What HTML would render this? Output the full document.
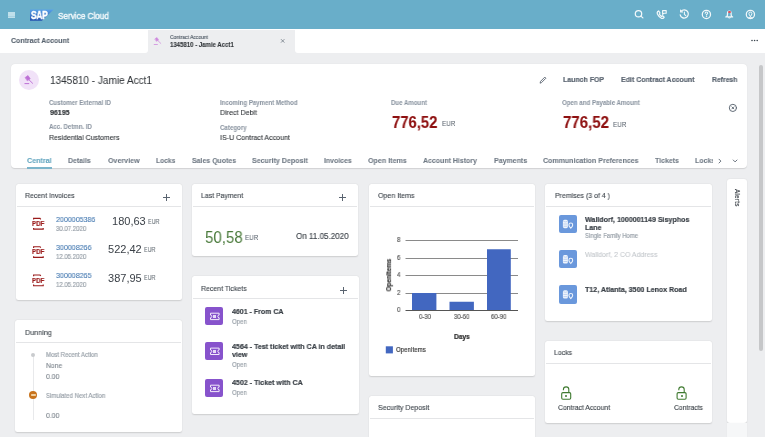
<!DOCTYPE html>
<html><head><meta charset="utf-8"><style>
html,body{margin:0;padding:0;width:765px;height:437px;overflow:hidden;background:#edeef0;font-family:"Liberation Sans",sans-serif;}
.t{position:absolute;white-space:nowrap;will-change:transform;}
</style></head><body>
<div style="position:absolute;left:0px;top:0px;width:765px;height:29px;background:#69aec9"></div>
<div style="position:absolute;left:8.4px;top:12.1px;width:6.6px;height:5.9px;background:#a9d4e3"></div>
<div style="position:absolute;left:8.4px;top:12.3px;width:6.6px;height:1.3px;background:#bfe0eb"></div>
<div style="position:absolute;left:8.4px;top:14.4px;width:6.6px;height:1.3px;background:#bfe0eb"></div>
<div style="position:absolute;left:8.4px;top:16.5px;width:6.6px;height:1.3px;background:#bfe0eb"></div>
<svg style="position:absolute;left:0;top:0" width="765" height="29">
<defs><linearGradient id="sapg" x1="0" y1="0" x2="0" y2="1"><stop offset="0" stop-color="#5aa2e8"/><stop offset="1" stop-color="#2350ae"/></linearGradient></defs>
<polygon points="30,9.4 53.6,9.4 41.9,20.8 30,20.8" fill="url(#sapg)"/>
</svg>
<div class="t" style="left:30.50px;top:11px;font-size:10.4px;line-height:10.4px;font-weight:bold;color:#ffffff;transform:scaleX(0.8000);transform-origin:0 0;-webkit-text-stroke:0.45px #fff;letter-spacing:-0.2px">SAP</div>
<div class="t" style="left:57.50px;top:11px;font-size:9.42px;line-height:9.42px;font-weight:normal;color:#eef6f9;transform:scaleX(0.8696);transform-origin:0 0;-webkit-text-stroke:0.5px #eef6f9">Service Cloud</div>
<svg style="position:absolute;left:0;top:0" width="765" height="29" fill="none" stroke="#f2f8fa" stroke-width="1.25" stroke-linecap="round" stroke-linejoin="round">
<circle cx="638.5" cy="13.7" r="3.2"/><line x1="640.9" y1="16.1" x2="642.9" y2="17.9"/>
<path d="M658.6 10.9 l-1.1 0.9 q-0.7 0.9 0 2.4 q1.4 2.8 3.9 4.1 q1.3 0.5 2.1 -0.3 l0.7 -0.8 l-1.6 -1.5 l-1 0.7 q-1.5 -0.9 -2.3 -2.4 l0.7 -1 z"/>
<path d="M662.6 10.6 h3.6 v2.6 h-2.2 l-1.4 1.1 z" stroke-width="1.1"/>
<path d="M681.1 11.2 a4.1 4.1 0 1 1 -0.9 3.6"/><path d="M680.6 10.0 v1.9 h1.9" stroke-width="1.1"/><path d="M684.4 12.0 v2.4 l1.4 1.2" stroke-width="1.1"/>
<circle cx="706.4" cy="14.4" r="4.1"/><path d="M705.2 13.3 q0 -1.3 1.2 -1.3 q1.3 0 1.3 1.2 q0 0.8 -1.3 1.3 v0.6" stroke-width="1.05"/><circle cx="706.4" cy="16.6" r="0.3" fill="#f2f8fa" stroke-width="0.6"/>
<path d="M725.8 16.9 h6.8 M726.6 16.7 q0.9 -0.8 0.9 -2.4 v-1.1 q0 -2.2 1.8 -2.2 q1.8 0 1.8 2.2 v1.1 q0 1.6 0.9 2.4"/><path d="M728.5 17.8 q0.9 0.6 1.8 0" stroke-width="1"/>
<circle cx="750.4" cy="14.4" r="4.1"/><path d="M750.4 16.4 q-1.5 -1.5 -1.5 -2.8 a1.5 1.5 0 0 1 3 0 q0 1.3 -1.5 2.8 z" stroke-width="1"/><path d="M748.2 17.9 q2.2 -1.2 4.4 0" stroke-width="1"/>
</svg>
<div style="position:absolute;left:728.1px;top:10.6px;width:2.5px;height:2.5px;border-radius:50%;background:#e0505a"></div>
<div style="position:absolute;left:0px;top:29px;width:148px;height:24px;background:#fff;border-bottom-right-radius:3px"></div>
<div style="position:absolute;left:295px;top:29px;width:470px;height:24px;background:#fff;border-bottom-left-radius:3px"></div>
<div style="position:absolute;left:148px;top:29px;width:147px;height:1px;background:#fff"></div>
<div style="position:absolute;left:148px;top:29.9px;width:147px;height:24px;background:#edeef0;border-top-left-radius:4px;border-top-right-radius:4px"></div>
<div class="t" style="left:10.80px;top:37px;font-size:7.67px;line-height:7.67px;font-weight:bold;color:#58636f;transform:scaleX(0.9091);transform-origin:0 0;-webkit-text-stroke:0.1px #58636f;">Contract Account</div>
<div class="t" style="left:170.00px;top:35px;font-size:5.92px;line-height:5.92px;font-weight:normal;color:#5c6670;transform:scaleX(0.8475);transform-origin:0 0;-webkit-text-stroke:0.2px #5c6670;">Contract Account</div>
<div class="t" style="left:170.00px;top:42px;font-size:6.64px;line-height:6.64px;font-weight:bold;color:#32363a;transform:scaleX(0.9091);transform-origin:0 0;-webkit-text-stroke:0.1px #32363a;">1345810 - Jamie Acct1</div>
<svg style="position:absolute;left:0;top:0" width="765" height="60">
<g fill="#cf8ade" stroke="#cf8ade" stroke-linecap="round">
<path d="M155.0 38.8 l2.0 -1.3 l1.6 2.4 l-2.0 1.3 z" stroke-width="0.5"/>
<line x1="157.9" y1="40.6" x2="160.8" y2="43.4" stroke-width="0.75"/>
<line x1="154.2" y1="44.5" x2="157.4" y2="44.5" stroke-width="0.8"/>
</g>
<g stroke="#707a84" stroke-width="0.8"><line x1="281" y1="39.2" x2="284.4" y2="42.6"/><line x1="284.4" y1="39.2" x2="281" y2="42.6"/></g>
<g fill="#3c4650"><circle cx="752" cy="40.5" r="0.8"/><circle cx="754.6" cy="40.5" r="0.8"/><circle cx="757.2" cy="40.5" r="0.8"/></g>
</svg>
<div style="position:absolute;left:10.5px;top:63.5px;width:736.7px;height:104px;background:#fff;border-radius:4px;box-shadow:0 0.5px 1px rgba(0,0,0,0.12)"></div>
<div style="position:absolute;left:18.7px;top:70.3px;width:20px;height:20px;background:#f1e2f8;border-radius:50%"></div>
<svg style="position:absolute;left:0;top:60" width="60" height="40">
<g fill="#bd6fd6" stroke="#bd6fd6" stroke-linecap="round">
<path d="M25.4 17.4 l2.6 -1.8 l2.2 3.2 l-2.6 1.8 z" stroke-width="0.7"/>
<line x1="29.0" y1="19.8" x2="32.6" y2="23.3" stroke-width="0.95"/>
<line x1="24.9" y1="23.6" x2="28.8" y2="23.6" stroke-width="1.0"/>
</g></svg>
<div class="t" style="left:49.70px;top:75px;font-size:10.52px;line-height:10.52px;font-weight:normal;color:#32363a;transform:scaleX(0.9524);transform-origin:0 0;-webkit-text-stroke:0.05px #32363a;">1345810 - Jamie Acct1</div>
<div class="t" style="left:49.00px;top:100px;font-size:6.71px;line-height:6.71px;font-weight:bold;color:#8b95a1;transform:scaleX(0.9091);transform-origin:0 0;-webkit-text-stroke:0.05px #8b95a1;">Customer External ID</div>
<div class="t" style="left:49.70px;top:109px;font-size:7.75px;line-height:7.75px;font-weight:bold;color:#32363a;transform:scaleX(0.9091);transform-origin:0 0;-webkit-text-stroke:0.2px #32363a;">96195</div>
<div class="t" style="left:49.00px;top:124px;font-size:6.7px;line-height:6.7px;font-weight:bold;color:#8b95a1;transform:scaleX(0.9091);transform-origin:0 0;-webkit-text-stroke:0.05px #8b95a1;">Acc. Detmn. ID</div>
<div class="t" style="left:49.00px;top:134px;font-size:7.71px;line-height:7.71px;font-weight:normal;color:#32363a;transform:scaleX(0.9091);transform-origin:0 0;-webkit-text-stroke:0.12px #32363a;">Residential Customers</div>
<div class="t" style="left:219.90px;top:100px;font-size:6.71px;line-height:6.71px;font-weight:bold;color:#8b95a1;transform:scaleX(0.9091);transform-origin:0 0;-webkit-text-stroke:0.05px #8b95a1;">Incoming Payment Method</div>
<div class="t" style="left:219.90px;top:109px;font-size:7.81px;line-height:7.81px;font-weight:normal;color:#32363a;transform:scaleX(0.9091);transform-origin:0 0;-webkit-text-stroke:0.12px #32363a;">Direct Debit</div>
<div class="t" style="left:219.90px;top:125px;font-size:6.75px;line-height:6.75px;font-weight:bold;color:#8b95a1;transform:scaleX(0.9091);transform-origin:0 0;-webkit-text-stroke:0.05px #8b95a1;">Category</div>
<div class="t" style="left:219.90px;top:134px;font-size:7.79px;line-height:7.79px;font-weight:normal;color:#32363a;transform:scaleX(0.9091);transform-origin:0 0;-webkit-text-stroke:0.12px #32363a;">IS-U Contract Account</div>
<div class="t" style="left:391.10px;top:100px;font-size:6.7px;line-height:6.7px;font-weight:bold;color:#8b95a1;transform:scaleX(0.9091);transform-origin:0 0;-webkit-text-stroke:0.05px #8b95a1;">Due Amount</div>
<div class="t" style="left:391.80px;top:115px;font-size:15.59px;line-height:15.59px;font-weight:bold;color:#8e1010;transform:scaleX(0.9524);transform-origin:0 0;-webkit-text-stroke:0.1px #8e1010;">776,52</div>
<div class="t" style="left:441.90px;top:121px;font-size:6.85px;line-height:6.85px;font-weight:normal;color:#5d6670;transform:scaleX(0.9259);transform-origin:0 0;-webkit-text-stroke:0.05px #5d6670;">EUR</div>
<div class="t" style="left:562.20px;top:100px;font-size:6.74px;line-height:6.74px;font-weight:bold;color:#8b95a1;transform:scaleX(0.9091);transform-origin:0 0;-webkit-text-stroke:0.05px #8b95a1;">Open and Payable Amount</div>
<div class="t" style="left:562.50px;top:115px;font-size:15.79px;line-height:15.79px;font-weight:bold;color:#8e1010;transform:scaleX(0.9524);transform-origin:0 0;-webkit-text-stroke:0.1px #8e1010;">776,52</div>
<div class="t" style="left:612.80px;top:122px;font-size:6.91px;line-height:6.91px;font-weight:normal;color:#5d6670;transform:scaleX(0.9259);transform-origin:0 0;-webkit-text-stroke:0.05px #5d6670;">EUR</div>
<div class="t" style="left:563.10px;top:76px;font-size:7.68px;line-height:7.68px;font-weight:bold;color:#5a6470;transform:scaleX(0.9091);transform-origin:0 0;-webkit-text-stroke:0.2px #5a6470;">Launch FOP</div>
<div class="t" style="left:621.20px;top:76px;font-size:7.7px;line-height:7.7px;font-weight:bold;color:#5a6470;transform:scaleX(0.9091);transform-origin:0 0;-webkit-text-stroke:0.2px #5a6470;">Edit Contract Account</div>
<div class="t" style="left:711.80px;top:76px;font-size:7.47px;line-height:7.47px;font-weight:bold;color:#5a6470;transform:scaleX(0.9091);transform-origin:0 0;-webkit-text-stroke:0.2px #5a6470;">Refresh</div>
<svg style="position:absolute;left:0;top:0" width="765" height="170" fill="none" stroke-linecap="round">
<path d="M540.2 82.8 l0.4 -1.5 l4.2 -4.2 l1.1 1.1 l-4.2 4.2 z" stroke="#5a6470" stroke-width="0.9"/>
<circle cx="732.9" cy="107.9" r="3.6" stroke="#5a6470" stroke-width="0.95"/>
<path d="M731.9 106.9 l2 2 M733.9 106.9 l-2 2" stroke="#5a6470" stroke-width="0.9"/>
<path d="M719 159.2 l1.9 1.9 l-1.9 1.9" stroke="#5a6470" stroke-width="0.9"/>
<path d="M733.2 160 l1.9 1.9 l1.9 -1.9" stroke="#5a6470" stroke-width="0.9"/>
</svg>
<div class="t" style="left:27.20px;top:157px;font-size:7.85px;line-height:7.85px;font-weight:bold;color:#62a5bf;transform:scaleX(0.9091);transform-origin:0 0;-webkit-text-stroke:0.08px #62a5bf;">Central</div>
<div class="t" style="left:68.20px;top:157px;font-size:7.65px;line-height:7.65px;font-weight:bold;color:#6f7984;transform:scaleX(0.9091);transform-origin:0 0;-webkit-text-stroke:0.08px #6f7984;">Details</div>
<div class="t" style="left:107.70px;top:157px;font-size:7.82px;line-height:7.82px;font-weight:bold;color:#6f7984;transform:scaleX(0.9091);transform-origin:0 0;-webkit-text-stroke:0.08px #6f7984;">Overview</div>
<div class="t" style="left:155.80px;top:157px;font-size:7.38px;line-height:7.38px;font-weight:bold;color:#6f7984;transform:scaleX(0.9091);transform-origin:0 0;-webkit-text-stroke:0.08px #6f7984;">Locks</div>
<div class="t" style="left:191.80px;top:157px;font-size:7.67px;line-height:7.67px;font-weight:bold;color:#6f7984;transform:scaleX(0.9091);transform-origin:0 0;-webkit-text-stroke:0.08px #6f7984;">Sales Quotes</div>
<div class="t" style="left:252.00px;top:157px;font-size:7.78px;line-height:7.78px;font-weight:bold;color:#6f7984;transform:scaleX(0.9091);transform-origin:0 0;-webkit-text-stroke:0.08px #6f7984;">Security Deposit</div>
<div class="t" style="left:324.00px;top:157px;font-size:7.64px;line-height:7.64px;font-weight:bold;color:#6f7984;transform:scaleX(0.9091);transform-origin:0 0;-webkit-text-stroke:0.08px #6f7984;">Invoices</div>
<div class="t" style="left:368.00px;top:157px;font-size:7.82px;line-height:7.82px;font-weight:bold;color:#6f7984;transform:scaleX(0.9091);transform-origin:0 0;-webkit-text-stroke:0.08px #6f7984;">Open Items</div>
<div class="t" style="left:423.00px;top:157px;font-size:7.68px;line-height:7.68px;font-weight:bold;color:#6f7984;transform:scaleX(0.9091);transform-origin:0 0;-webkit-text-stroke:0.08px #6f7984;">Account History</div>
<div class="t" style="left:493.50px;top:157px;font-size:7.73px;line-height:7.73px;font-weight:bold;color:#6f7984;transform:scaleX(0.9091);transform-origin:0 0;-webkit-text-stroke:0.08px #6f7984;">Payments</div>
<div class="t" style="left:542.90px;top:157px;font-size:7.76px;line-height:7.76px;font-weight:bold;color:#6f7984;transform:scaleX(0.9091);transform-origin:0 0;-webkit-text-stroke:0.08px #6f7984;">Communication Preferences</div>
<div class="t" style="left:654.70px;top:157px;font-size:7.67px;line-height:7.67px;font-weight:bold;color:#6f7984;transform:scaleX(0.9091);transform-origin:0 0;-webkit-text-stroke:0.08px #6f7984;">Tickets</div>
<div class="t" style="left:694.80px;top:157px;font-size:7.7px;line-height:7.7px;font-weight:bold;color:#6f7984;transform:scaleX(0.9091);transform-origin:0 0;-webkit-text-stroke:0.08px #6f7984;width:20px;overflow:hidden">Locks</div>
<div style="position:absolute;left:27px;top:167.4px;width:25px;height:1.5px;background:#7bb4ca"></div>
<div style="position:absolute;left:15.8px;top:183.8px;width:165.8px;height:115.9px;background:#fff;border-radius:2.5px;box-shadow:0 0.4px 1.4px rgba(0,0,0,0.14)"></div>
<div class="t" style="left:25.00px;top:192px;font-size:7.67px;line-height:7.67px;font-weight:normal;color:#3e454c;transform:scaleX(0.9091);transform-origin:0 0;-webkit-text-stroke:0.12px #3e454c;">Recent Invoices</div>
<div style="position:absolute;left:16.8px;top:206.0px;width:163.8px;height:1px;background:#e4e5e7"></div>
<div style="position:absolute;left:163.0px;top:197.35000000000002px;width:7px;height:0.9px;background:#5a6470"></div>
<div style="position:absolute;left:166.05px;top:194.3px;width:0.9px;height:7px;background:#5a6470"></div>
<div style="position:absolute;left:15.3px;top:320.2px;width:166.8px;height:112.30000000000001px;background:#fff;border-radius:2.5px;box-shadow:0 0.4px 1.4px rgba(0,0,0,0.14)"></div>
<div class="t" style="left:24.50px;top:329px;font-size:7.91px;line-height:7.91px;font-weight:normal;color:#3e454c;transform:scaleX(0.9091);transform-origin:0 0;-webkit-text-stroke:0.12px #3e454c;">Dunning</div>
<div style="position:absolute;left:16.3px;top:342.2px;width:164.8px;height:1px;background:#e4e5e7"></div>
<div style="position:absolute;left:192.1px;top:183.9px;width:166.3px;height:72.0px;background:#fff;border-radius:2.5px;box-shadow:0 0.4px 1.4px rgba(0,0,0,0.14)"></div>
<div class="t" style="left:200.80px;top:192px;font-size:7.57px;line-height:7.57px;font-weight:normal;color:#3e454c;transform:scaleX(0.9091);transform-origin:0 0;-webkit-text-stroke:0.12px #3e454c;">Last Payment</div>
<div style="position:absolute;left:193.1px;top:205.7px;width:164.3px;height:1px;background:#e4e5e7"></div>
<div style="position:absolute;left:339.1px;top:197.35000000000002px;width:7px;height:0.9px;background:#5a6470"></div>
<div style="position:absolute;left:342.15000000000003px;top:194.3px;width:0.9px;height:7px;background:#5a6470"></div>
<div style="position:absolute;left:192.0px;top:276.2px;width:166.5px;height:137.8px;background:#fff;border-radius:2.5px;box-shadow:0 0.4px 1.4px rgba(0,0,0,0.14)"></div>
<div class="t" style="left:201.10px;top:285px;font-size:7.67px;line-height:7.67px;font-weight:normal;color:#3e454c;transform:scaleX(0.9091);transform-origin:0 0;-webkit-text-stroke:0.12px #3e454c;">Recent Tickets</div>
<div style="position:absolute;left:193.0px;top:298.1px;width:164.5px;height:1px;background:#e4e5e7"></div>
<div style="position:absolute;left:339.5px;top:289.55px;width:7px;height:0.9px;background:#5a6470"></div>
<div style="position:absolute;left:342.55px;top:286.5px;width:0.9px;height:7px;background:#5a6470"></div>
<div style="position:absolute;left:369.0px;top:183.8px;width:166.2px;height:192.0px;background:#fff;border-radius:2.5px;box-shadow:0 0.4px 1.4px rgba(0,0,0,0.14)"></div>
<div class="t" style="left:377.60px;top:192px;font-size:7.77px;line-height:7.77px;font-weight:normal;color:#3e454c;transform:scaleX(0.9091);transform-origin:0 0;-webkit-text-stroke:0.12px #3e454c;">Open Items</div>
<div style="position:absolute;left:370.0px;top:206.1px;width:164.2px;height:1px;background:#e4e5e7"></div>
<div style="position:absolute;left:369.1px;top:396.0px;width:165.9px;height:50.4px;background:#fff;border-radius:2.5px;box-shadow:0 0.4px 1.4px rgba(0,0,0,0.14)"></div>
<div class="t" style="left:377.80px;top:404px;font-size:7.74px;line-height:7.74px;font-weight:normal;color:#3e454c;transform:scaleX(0.9091);transform-origin:0 0;-webkit-text-stroke:0.12px #3e454c;">Security Deposit</div>
<div style="position:absolute;left:370.1px;top:418.0px;width:163.9px;height:1px;background:#e4e5e7"></div>
<div style="position:absolute;left:545.3px;top:183.9px;width:166.5px;height:137.0px;background:#fff;border-radius:2.5px;box-shadow:0 0.4px 1.4px rgba(0,0,0,0.14)"></div>
<div class="t" style="left:554.90px;top:192px;font-size:7.67px;line-height:7.67px;font-weight:normal;color:#3e454c;transform:scaleX(0.9091);transform-origin:0 0;-webkit-text-stroke:0.12px #3e454c;">Premises (3 of 4 )</div>
<div style="position:absolute;left:546.3px;top:205.8px;width:164.5px;height:1px;background:#e4e5e7"></div>
<div style="position:absolute;left:545.4px;top:341.0px;width:166.5px;height:82.0px;background:#fff;border-radius:2.5px;box-shadow:0 0.4px 1.4px rgba(0,0,0,0.14)"></div>
<div class="t" style="left:554.20px;top:349px;font-size:7.62px;line-height:7.62px;font-weight:normal;color:#3e454c;transform:scaleX(0.9091);transform-origin:0 0;-webkit-text-stroke:0.12px #3e454c;">Locks</div>
<div style="position:absolute;left:546.4px;top:362.7px;width:164.5px;height:1px;background:#e4e5e7"></div>
<div class="t" style="left:55.70px;top:216px;font-size:7.79px;line-height:7.79px;font-weight:normal;color:#4a7db3;transform:scaleX(0.9091);transform-origin:0 0;-webkit-text-stroke:0.12px #4a7db3;">2000005386</div>
<div class="t" style="left:55.70px;top:226px;font-size:7.14px;line-height:7.14px;font-weight:normal;color:#9aa2aa;transform:scaleX(0.8475);transform-origin:0 0;-webkit-text-stroke:0.2px #9aa2aa;">30.07.2020</div>
<div class="t" style="left:111.80px;top:216px;font-size:11.02px;line-height:11.02px;font-weight:normal;color:#3a4047;">180,63</div>
<div class="t" style="left:148.20px;top:218px;font-size:7.02px;line-height:7.02px;font-weight:normal;color:#6a727a;transform:scaleX(0.7692);transform-origin:0 0;-webkit-text-stroke:0.1px #6a727a;">EUR</div>
<svg style="position:absolute;left:0;top:0" width="200" height="300" fill="none" stroke="#9a1b1b" stroke-width="1.15">
<path d="M33.6 219.6 v-1.2 h6.4 l0.8 0.9"/><path d="M33.6 228.0 v1.1 h9.6 v-1.1" />
</svg>
<div class="t" style="left:32.00px;top:220px;font-size:7.32px;line-height:7.32px;font-weight:bold;color:#9a1b1b;transform:scaleX(0.8333);transform-origin:0 0;-webkit-text-stroke:0.2px #9a1b1b">PDF</div>
<div class="t" style="left:55.70px;top:244px;font-size:7.8px;line-height:7.8px;font-weight:normal;color:#4a7db3;transform:scaleX(0.9091);transform-origin:0 0;-webkit-text-stroke:0.12px #4a7db3;">300008266</div>
<div class="t" style="left:55.70px;top:254px;font-size:7.14px;line-height:7.14px;font-weight:normal;color:#9aa2aa;transform:scaleX(0.8475);transform-origin:0 0;-webkit-text-stroke:0.2px #9aa2aa;">12.05.2020</div>
<div class="t" style="left:107.70px;top:244px;font-size:11.02px;line-height:11.02px;font-weight:normal;color:#3a4047;">522,42</div>
<div class="t" style="left:144.10px;top:246px;font-size:7.02px;line-height:7.02px;font-weight:normal;color:#6a727a;transform:scaleX(0.7692);transform-origin:0 0;-webkit-text-stroke:0.1px #6a727a;">EUR</div>
<svg style="position:absolute;left:0;top:0" width="200" height="300" fill="none" stroke="#9a1b1b" stroke-width="1.15">
<path d="M33.6 247.9 v-1.2 h6.4 l0.8 0.9"/><path d="M33.6 256.3 v1.1 h9.6 v-1.1" />
</svg>
<div class="t" style="left:32.00px;top:248px;font-size:7.32px;line-height:7.32px;font-weight:bold;color:#9a1b1b;transform:scaleX(0.8333);transform-origin:0 0;-webkit-text-stroke:0.2px #9a1b1b">PDF</div>
<div class="t" style="left:55.70px;top:272px;font-size:7.8px;line-height:7.8px;font-weight:normal;color:#4a7db3;transform:scaleX(0.9091);transform-origin:0 0;-webkit-text-stroke:0.12px #4a7db3;">300008265</div>
<div class="t" style="left:55.70px;top:282px;font-size:7.14px;line-height:7.14px;font-weight:normal;color:#9aa2aa;transform:scaleX(0.8475);transform-origin:0 0;-webkit-text-stroke:0.2px #9aa2aa;">12.05.2020</div>
<div class="t" style="left:107.70px;top:273px;font-size:11.02px;line-height:11.02px;font-weight:normal;color:#3a4047;">387,95</div>
<div class="t" style="left:144.10px;top:274px;font-size:7.02px;line-height:7.02px;font-weight:normal;color:#6a727a;transform:scaleX(0.7692);transform-origin:0 0;-webkit-text-stroke:0.1px #6a727a;">EUR</div>
<svg style="position:absolute;left:0;top:0" width="200" height="300" fill="none" stroke="#9a1b1b" stroke-width="1.15">
<path d="M33.6 276.2 v-1.2 h6.4 l0.8 0.9"/><path d="M33.6 284.6 v1.1 h9.6 v-1.1" />
</svg>
<div class="t" style="left:32.00px;top:277px;font-size:7.32px;line-height:7.32px;font-weight:bold;color:#9a1b1b;transform:scaleX(0.8333);transform-origin:0 0;-webkit-text-stroke:0.2px #9a1b1b">PDF</div>
<div style="position:absolute;left:32.7px;top:356px;width:0.7px;height:64px;background:#e8e9eb"></div>
<div style="position:absolute;left:30.8px;top:352.9px;width:4.2px;height:4.2px;border-radius:50%;background:#c9cbce"></div>
<div style="position:absolute;left:29.0px;top:390.7px;width:8.4px;height:8.4px;border-radius:50%;background:#c8731c"></div>
<div style="position:absolute;left:31.0px;top:393.5px;width:4.6px;height:2.8px;border-radius:0.8px;background:#f0cf9f"></div>
<div class="t" style="left:45.50px;top:352px;font-size:7.08px;line-height:7.08px;font-weight:normal;color:#9aa2aa;transform:scaleX(0.8475);transform-origin:0 0;-webkit-text-stroke:0.2px #9aa2aa;">Most Recent Action</div>
<div class="t" style="left:45.50px;top:362px;font-size:7.45px;line-height:7.45px;font-weight:normal;color:#7d858d;transform:scaleX(0.9091);transform-origin:0 0;-webkit-text-stroke:0.12px #7d858d;">None</div>
<div class="t" style="left:45.50px;top:373px;font-size:7.52px;line-height:7.52px;font-weight:normal;color:#7d858d;transform:scaleX(0.9091);transform-origin:0 0;-webkit-text-stroke:0.12px #7d858d;">0.00</div>
<div class="t" style="left:45.50px;top:393px;font-size:7.15px;line-height:7.15px;font-weight:normal;color:#9aa2aa;transform:scaleX(0.8475);transform-origin:0 0;-webkit-text-stroke:0.2px #9aa2aa;">Simulated Next Action</div>
<div class="t" style="left:45.50px;top:412px;font-size:7.52px;line-height:7.52px;font-weight:normal;color:#7d858d;transform:scaleX(0.9091);transform-origin:0 0;-webkit-text-stroke:0.12px #7d858d;">0.00</div>
<div class="t" style="left:204.50px;top:230px;font-size:16.57px;line-height:16.57px;font-weight:normal;color:#4b7b3c;transform:scaleX(0.9091);transform-origin:0 0;">50,58</div>
<div class="t" style="left:245.00px;top:235px;font-size:6.75px;line-height:6.75px;font-weight:normal;color:#5d6670;transform:scaleX(0.9259);transform-origin:0 0;-webkit-text-stroke:0.05px #5d6670;">EUR</div>
<div class="t" style="left:296.30px;top:232px;font-size:8.86px;line-height:8.86px;font-weight:normal;color:#3a4047;transform:scaleX(0.9091);transform-origin:0 0;-webkit-text-stroke:0.12px #3a4047;">On 11.05.2020</div>
<div style="position:absolute;left:205px;top:307.2px;width:18.4px;height:18.2px;background:#8753cc;border-radius:2px"></div>
<svg style="position:absolute;left:0;top:0" width="360" height="420" fill="none" stroke="#f3ecfb" stroke-width="1.0">
<path d="M210.5 313.20 h8.6 v1.9 a1.3 1.3 0 0 0 0 2.6 v1.9 h-8.6 v-1.9 a1.3 1.3 0 0 0 0 -2.6 z"/></svg>
<div style="position:absolute;left:213.3px;top:315.2px;width:3.0px;height:2.5px;background:#e6daf7"></div>
<div class="t" style="left:231.70px;top:308px;font-size:7.72px;line-height:7.72px;font-weight:bold;color:#3a4047;transform:scaleX(0.9091);transform-origin:0 0;-webkit-text-stroke:0.2px #3a4047;">4601 - From CA</div>
<div class="t" style="left:231.70px;top:318px;font-size:7.2px;line-height:7.2px;font-weight:normal;color:#9aa2aa;transform:scaleX(0.8475);transform-origin:0 0;-webkit-text-stroke:0.2px #9aa2aa;">Open</div>
<div style="position:absolute;left:205px;top:342.1px;width:18.4px;height:18.2px;background:#8753cc;border-radius:2px"></div>
<svg style="position:absolute;left:0;top:0" width="360" height="420" fill="none" stroke="#f3ecfb" stroke-width="1.0">
<path d="M210.5 348.10 h8.6 v1.9 a1.3 1.3 0 0 0 0 2.6 v1.9 h-8.6 v-1.9 a1.3 1.3 0 0 0 0 -2.6 z"/></svg>
<div style="position:absolute;left:213.3px;top:350.1px;width:3.0px;height:2.5px;background:#e6daf7"></div>
<div class="t" style="left:231.70px;top:343px;font-size:7.79px;line-height:7.79px;font-weight:bold;color:#3a4047;transform:scaleX(0.9091);transform-origin:0 0;-webkit-text-stroke:0.2px #3a4047;">4564 - Test ticket with CA in detail</div>
<div class="t" style="left:231.70px;top:351px;font-size:7.8px;line-height:7.8px;font-weight:bold;color:#3a4047;transform:scaleX(0.9091);transform-origin:0 0;-webkit-text-stroke:0.2px #3a4047;">view</div>
<div class="t" style="left:231.70px;top:361px;font-size:7.2px;line-height:7.2px;font-weight:normal;color:#9aa2aa;transform:scaleX(0.8475);transform-origin:0 0;-webkit-text-stroke:0.2px #9aa2aa;">Open</div>
<div style="position:absolute;left:205px;top:379.2px;width:18.4px;height:18.2px;background:#8753cc;border-radius:2px"></div>
<svg style="position:absolute;left:0;top:0" width="360" height="420" fill="none" stroke="#f3ecfb" stroke-width="1.0">
<path d="M210.5 385.20 h8.6 v1.9 a1.3 1.3 0 0 0 0 2.6 v1.9 h-8.6 v-1.9 a1.3 1.3 0 0 0 0 -2.6 z"/></svg>
<div style="position:absolute;left:213.3px;top:387.2px;width:3.0px;height:2.5px;background:#e6daf7"></div>
<div class="t" style="left:231.70px;top:379px;font-size:7.8px;line-height:7.8px;font-weight:bold;color:#3a4047;transform:scaleX(0.9091);transform-origin:0 0;-webkit-text-stroke:0.2px #3a4047;">4502 - Ticket with CA</div>
<div class="t" style="left:231.70px;top:389px;font-size:7.2px;line-height:7.2px;font-weight:normal;color:#9aa2aa;transform:scaleX(0.8475);transform-origin:0 0;-webkit-text-stroke:0.2px #9aa2aa;">Open</div>
<svg style="position:absolute;left:0;top:0" width="765" height="437">
<g stroke="#8a8a8a" stroke-width="1">
<line x1="405.5" y1="240.5" x2="518" y2="240.5"/>
<line x1="405.5" y1="258.5" x2="518" y2="258.5"/>
<line x1="405.5" y1="275.5" x2="518" y2="275.5"/>
<line x1="405.5" y1="293.5" x2="518" y2="293.5"/>
</g>
<g fill="#4267c0">
<rect x="412" y="293" width="24.4" height="17.5"/>
<rect x="449.5" y="301.75" width="24.4" height="8.75"/>
<rect x="487" y="249.25" width="23.8" height="61.25"/>
<rect x="385.8" y="346.3" width="7.1" height="7.1"/>
</g>
<line x1="405.5" y1="310.5" x2="518" y2="310.5" stroke="#555" stroke-width="1"/>
</svg>
<div class="t" style="left:397.00px;top:236px;font-size:7.32px;line-height:7.32px;font-weight:normal;color:#5d5d5d;transform:scaleX(0.8475);transform-origin:0 0;-webkit-text-stroke:0.2px #5d5d5d;">8</div>
<div class="t" style="left:397.00px;top:254px;font-size:7.32px;line-height:7.32px;font-weight:normal;color:#5d5d5d;transform:scaleX(0.8475);transform-origin:0 0;-webkit-text-stroke:0.2px #5d5d5d;">6</div>
<div class="t" style="left:397.00px;top:271px;font-size:7.32px;line-height:7.32px;font-weight:normal;color:#5d5d5d;transform:scaleX(0.8475);transform-origin:0 0;-webkit-text-stroke:0.2px #5d5d5d;">4</div>
<div class="t" style="left:397.00px;top:289px;font-size:7.32px;line-height:7.32px;font-weight:normal;color:#5d5d5d;transform:scaleX(0.8475);transform-origin:0 0;-webkit-text-stroke:0.2px #5d5d5d;">2</div>
<div class="t" style="left:397.00px;top:306px;font-size:7.32px;line-height:7.32px;font-weight:normal;color:#5d5d5d;transform:scaleX(0.8475);transform-origin:0 0;-webkit-text-stroke:0.2px #5d5d5d;">0</div>
<div class="t" style="left:418.50px;top:314px;font-size:7.08px;line-height:7.08px;font-weight:normal;color:#5d5d5d;transform:scaleX(0.8475);transform-origin:0 0;-webkit-text-stroke:0.2px #5d5d5d;">0-30</div>
<div class="t" style="left:454.03px;top:314px;font-size:7.08px;line-height:7.08px;font-weight:normal;color:#5d5d5d;transform:scaleX(0.8475);transform-origin:0 0;-webkit-text-stroke:0.2px #5d5d5d;">30-60</div>
<div class="t" style="left:491.23px;top:314px;font-size:7.08px;line-height:7.08px;font-weight:normal;color:#5d5d5d;transform:scaleX(0.8475);transform-origin:0 0;-webkit-text-stroke:0.2px #5d5d5d;">60-90</div>
<div class="t" style="left:454.11px;top:333px;font-size:7.26px;line-height:7.26px;font-weight:bold;color:#2b2b2b;transform:scaleX(0.9091);transform-origin:0 0;-webkit-text-stroke:0.2px #2b2b2b;">Days</div>
<div class="t" style="left:395.90px;top:346px;font-size:7.19px;line-height:7.19px;font-weight:normal;color:#3a3a3a;transform:scaleX(0.8475);transform-origin:0 0;-webkit-text-stroke:0.2px #3a3a3a;">OpenItems</div>
<div class="t" style="left:372.5px;top:271.2px;width:34.5px;font-size:6.3px;line-height:6.3px;font-weight:bold;color:#2b2b2b;-webkit-text-stroke:0.15px #2b2b2b;transform:rotate(-90deg);transform-origin:17.25px 3.15px;text-align:center;left:372.4px;top:271.5px">OpenItems</div>
<div style="position:absolute;left:558.9px;top:215.0px;width:18.1px;height:18.2px;background:#6a98dc;border-radius:2px"></div>
<svg style="position:absolute;left:0;top:0" width="720" height="320">
<rect x="562.9" y="219.80" width="5" height="8.4" rx="1.6" fill="#f0f5fc"/>
<path d="M563.4 221.40 q2 1 4 0 M563.4 224.00 h4 M563.4 226.20 h4" stroke="#9dbbe8" stroke-width="0.6" fill="none"/>
<path d="M570.8 228.20 q-1.9 -1.9 -1.9 -3.3 a1.9 1.9 0 0 1 3.8 0 q0 1.4 -1.9 3.3 z" stroke="#f0f5fc" stroke-width="1.05" fill="none"/>
</svg>
<div style="position:absolute;left:558.9px;top:250.3px;width:18.1px;height:18.2px;background:#6a98dc;border-radius:2px"></div>
<svg style="position:absolute;left:0;top:0" width="720" height="320">
<rect x="562.9" y="255.10" width="5" height="8.4" rx="1.6" fill="#f0f5fc"/>
<path d="M563.4 256.70 q2 1 4 0 M563.4 259.30 h4 M563.4 261.50 h4" stroke="#9dbbe8" stroke-width="0.6" fill="none"/>
<path d="M570.8 263.50 q-1.9 -1.9 -1.9 -3.3 a1.9 1.9 0 0 1 3.8 0 q0 1.4 -1.9 3.3 z" stroke="#f0f5fc" stroke-width="1.05" fill="none"/>
</svg>
<div style="position:absolute;left:558.9px;top:285.4px;width:18.1px;height:18.2px;background:#6a98dc;border-radius:2px"></div>
<svg style="position:absolute;left:0;top:0" width="720" height="320">
<rect x="562.9" y="290.20" width="5" height="8.4" rx="1.6" fill="#f0f5fc"/>
<path d="M563.4 291.80 q2 1 4 0 M563.4 294.40 h4 M563.4 296.60 h4" stroke="#9dbbe8" stroke-width="0.6" fill="none"/>
<path d="M570.8 298.60 q-1.9 -1.9 -1.9 -3.3 a1.9 1.9 0 0 1 3.8 0 q0 1.4 -1.9 3.3 z" stroke="#f0f5fc" stroke-width="1.05" fill="none"/>
</svg>
<div class="t" style="left:585.40px;top:216px;font-size:7.79px;line-height:7.79px;font-weight:bold;color:#3a4047;transform:scaleX(0.9091);transform-origin:0 0;-webkit-text-stroke:0.2px #3a4047;">Walldorf, 1000001149 Sisyphos</div>
<div class="t" style="left:585.40px;top:224px;font-size:7.79px;line-height:7.79px;font-weight:bold;color:#3a4047;transform:scaleX(0.9091);transform-origin:0 0;-webkit-text-stroke:0.2px #3a4047;">Lane</div>
<div class="t" style="left:585.40px;top:232px;font-size:7.03px;line-height:7.03px;font-weight:normal;color:#9aa2aa;transform:scaleX(0.8475);transform-origin:0 0;-webkit-text-stroke:0.2px #9aa2aa;">Single Family Home</div>
<div class="t" style="left:585.40px;top:251px;font-size:7.66px;line-height:7.66px;font-weight:normal;color:#c5c9cd;transform:scaleX(0.9091);transform-origin:0 0;-webkit-text-stroke:0.12px #c5c9cd;">Walldorf, 2 CO Address</div>
<div class="t" style="left:585.40px;top:286px;font-size:7.78px;line-height:7.78px;font-weight:bold;color:#3a4047;transform:scaleX(0.9091);transform-origin:0 0;-webkit-text-stroke:0.2px #3a4047;">T12, Atlanta, 3500 Lenox Road</div>
<svg style="position:absolute;left:0;top:0" width="765" height="437" fill="none" stroke="#3f7a30" stroke-width="1.1">
<rect x="561.7" y="392.6" width="9" height="6.6" rx="1.2"/>
<path d="M563.4 390.2 v-0.6 a2.7 2.7 0 0 1 5.4 0 v3"/>
</svg>
<div style="position:absolute;left:565.1px;top:394.9px;width:2.2px;height:2.2px;border-radius:50%;background:#3f7a30"></div>
<svg style="position:absolute;left:0;top:0" width="765" height="437" fill="none" stroke="#3f7a30" stroke-width="1.1">
<rect x="677.1" y="392.6" width="9" height="6.6" rx="1.2"/>
<path d="M678.8 390.2 v-0.6 a2.7 2.7 0 0 1 5.4 0 v3"/>
</svg>
<div style="position:absolute;left:680.5px;top:394.9px;width:2.2px;height:2.2px;border-radius:50%;background:#3f7a30"></div>
<div class="t" style="left:558.40px;top:404px;font-size:7.53px;line-height:7.53px;font-weight:normal;color:#3a4047;transform:scaleX(0.9091);transform-origin:0 0;-webkit-text-stroke:0.12px #3a4047;">Contract Account</div>
<div class="t" style="left:674.00px;top:404px;font-size:7.43px;line-height:7.43px;font-weight:normal;color:#3a4047;transform:scaleX(0.9091);transform-origin:0 0;-webkit-text-stroke:0.12px #3a4047;">Contracts</div>
<div style="position:absolute;left:727.2px;top:178.8px;width:19.8px;height:243.8px;background:#fff;border-radius:3px;box-shadow:0 0.3px 1.5px rgba(0,0,0,0.12)"></div>
<div style="position:absolute;left:727.2px;top:423.2px;width:19.8px;height:15px;background:#f6f7f8;box-shadow:0 0 1px rgba(0,0,0,0.05)"></div>
<div style="position:absolute;white-space:nowrap;left:734.8px;top:188.6px;writing-mode:vertical-rl;font-size:6.3px;line-height:4.6px;letter-spacing:0.25px;color:#3a4047;-webkit-text-stroke:0.12px #3a4047">Alerts</div>
<div style="position:absolute;left:759.2px;top:65px;width:4.2px;height:286.4px;background:#c6c7c9;border-radius:2px"></div>
</body></html>
